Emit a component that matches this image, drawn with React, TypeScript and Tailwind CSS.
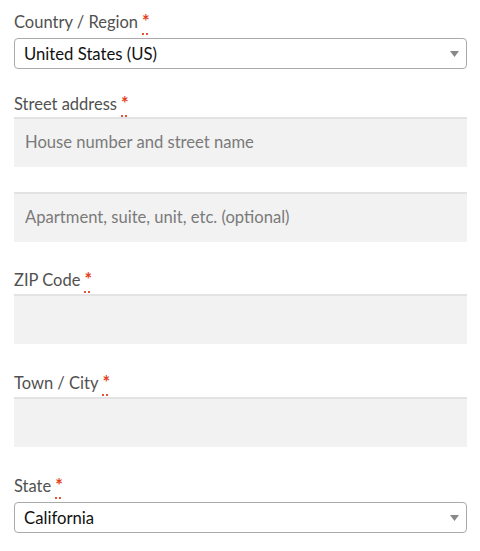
import React from "react";

function Req() {
  return (
    <abbr
      title="required"
      className="ml-[4px] text-[18px] leading-none font-bold text-[#e2401c] no-underline [text-decoration:underline_dotted] underline-offset-[6px]"
    >
      *
    </abbr>
  );
}

function Label({ children }: { children: React.ReactNode }) {
  return (
    <label className="block h-[24px] text-[16.5px] leading-[24px] text-[#515151]">
      {children}
      <Req />
    </label>
  );
}

function Select({ value }: { value: string }) {
  return (
    <div className="flex h-[31px] items-center justify-between rounded-[4px] border border-[#aaaaaa] bg-white pl-[9px] pr-[7px]">
      <span className="text-[16.7px] leading-[28px] text-[#111111]">{value}</span>
      <svg width="9" height="6" viewBox="0 0 9 6" aria-hidden="true">
        <path d="M0 0 L9 0 L4.5 6 Z" fill="#888888" />
      </svg>
    </div>
  );
}

function Input({ placeholder }: { placeholder?: string }) {
  return (
    <input
      type="text"
      placeholder={placeholder}
      className="block h-[50px] w-full bg-[#f2f2f2] px-[11px] text-[16.6px] text-[#43454b] shadow-[inset_0_2px_0_rgba(0,0,0,0.06)] outline-none placeholder:text-[#7a7a7a]"
    />
  );
}

export default function App() {
  return (
    <div className="min-h-[551px] w-[480px] bg-white font-['Lato',sans-serif]">
      <div className="w-[467px] pl-[14px] pt-[10px]">
        <div>
          <Label>Country / Region</Label>
          <div className="mt-[4px]">
            <Select value="United States (US)" />
          </div>
        </div>

        <div className="mt-[23px]">
          <Label>Street address</Label>
          <div className="mt-[1px]">
            <Input placeholder="House number and street name" />
          </div>
          <div className="mt-[25px]">
            <Input placeholder="Apartment, suite, unit, etc. (optional)" />
          </div>
        </div>

        <div className="mt-[26px]">
          <Label>ZIP Code</Label>
          <div className="mt-[2px]">
            <Input />
          </div>
        </div>

        <div className="mt-[27px]">
          <Label>Town / City</Label>
          <div className="mt-[2px]">
            <Input />
          </div>
        </div>

        <div className="mt-[27px]">
          <Label>State</Label>
          <div className="mt-[4px]">
            <Select value="California" />
          </div>
        </div>
      </div>
    </div>
  );
}
